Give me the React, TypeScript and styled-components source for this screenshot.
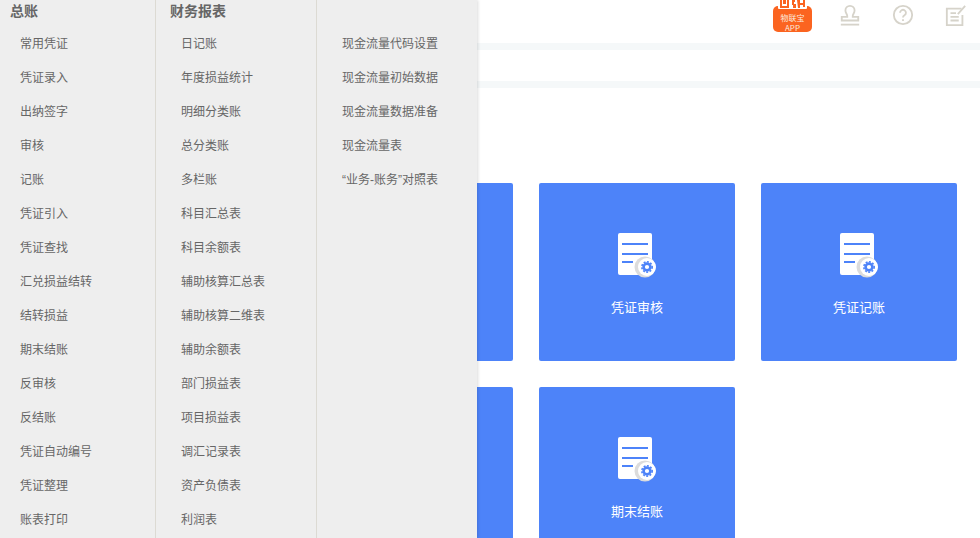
import React from "react";
import styled, { createGlobalStyle } from "styled-components";

const GlobalStyle = createGlobalStyle`
  html, body {
    margin: 0;
    padding: 0;
    background: #fff;
    overflow: hidden;
  }
  body {
    font-family: "Liberation Sans", "Noto Sans CJK SC", sans-serif;
  }
`;

const Page = styled.div`
  position: relative;
  width: 980px;
  height: 538px;
  overflow: hidden;
`;

const Header = styled.header`
  height: 43px;
  display: flex;
  justify-content: flex-end;
  align-items: flex-start;
  gap: 31px;
  padding-right: 13px;
`;

const AppBadge = styled.div`
  position: relative;
  width: 39px;
  height: 26px;
  margin: 6px -4px 0 0;
  background: #fb6420;
  border-radius: 5px;
  color: #fbe9df;
  font-size: 8px;
  line-height: 10px;
  text-align: center;
  padding-top: 7px;
  box-sizing: border-box;
  font-family: "Noto Sans CJK SC", sans-serif;
`;

const Qr = styled.svg`
  position: absolute;
  top: -6px;
  left: 5px;
  width: 29px;
  height: 9px;
`;

const HeaderIcon = styled.svg`
  width: 22px;
  height: 22px;
  margin-top: 4px;
  fill: none;
  stroke: #d6d3ca;
  stroke-width: 2;
`;

const Stripe = styled.div`
  height: 7px;
  background: #f5f8f9;
`;

const Crumb = styled.div`
  height: 31px;
`;

const Grid = styled.main`
  display: grid;
  grid-template-columns: repeat(3, 196px);
  gap: 26px;
  padding-top: 95px;
  margin-left: 317px;
`;

const Card = styled.div`
  height: 178px;
  background: #4d83f9;
  border-radius: 2px;
  display: flex;
  flex-direction: column;
  align-items: center;
  padding-top: 50px;
  box-sizing: border-box;
  color: #fff;
  font-size: 13px;
  font-family: "Noto Sans CJK SC", sans-serif;
`;

const CardIcon = styled.svg`
  width: 40px;
  height: 46px;
  margin-bottom: 18px;
  margin-left: 1px;
`;

const Menu = styled.nav`
  position: absolute;
  top: 0;
  left: 0;
  width: 477px;
  height: 538px;
  display: flex;
  background: #eeeeee;
  box-shadow: 1px 0 3px rgba(0, 0, 0, 0.14);
`;

const Column = styled.div`
  width: 161px;
  box-sizing: border-box;
  border-left: 1px solid #dcdad3;
  padding-left: 14px;

  &:first-child {
    width: 155px;
    border-left: 0;
    padding-left: 10px;
  }
`;

const Title = styled.h3`
  margin: 0;
  height: 27px;
  font-size: 14px;
  line-height: 20px;
  font-weight: 700;
  color: #666;
  font-family: "Noto Sans CJK SC", sans-serif;
`;

const List = styled.ul<{ $indent: number }>`
  list-style: none;
  margin: 0;
  padding: 0 0 0 ${(p) => p.$indent}px;
`;

const Item = styled.li`
  height: 34px;
  line-height: 34px;
  font-size: 12px;
  color: #666;
  white-space: nowrap;
  font-family: "Liberation Sans", "Noto Sans CJK SC", sans-serif;
`;

const DocIcon = () => (
  <CardIcon viewBox="0 0 40 46">
    <rect x="0" y="0" width="34" height="42" rx="2" fill="#fff" />
    <path d="M4 11h26M4 21h26M4 29h11" stroke="#4d83f9" strokeWidth="2" />
    <circle cx="27" cy="34" r="10.5" fill="#dcdcdc" />
    <circle cx="29" cy="34" r="9" fill="#fff" />
    <circle cx="29" cy="34" r="3.4" fill="none" stroke="#4d83f9" strokeWidth="2.6" />
    <circle cx="29" cy="34" r="5.2" fill="none" stroke="#4d83f9" strokeWidth="1.6" strokeDasharray="1.9 1.5" />
  </CardIcon>
);

const columns = [
  {
    title: "总账",
    indent: 10,
    items: ["常用凭证", "凭证录入", "出纳签字", "审核", "记账", "凭证引入", "凭证查找", "汇兑损益结转", "结转损益", "期末结账", "反审核", "反结账", "凭证自动编号", "凭证整理", "账表打印"],
  },
  {
    title: "财务报表",
    indent: 11,
    items: ["日记账", "年度损益统计", "明细分类账", "总分类账", "多栏账", "科目汇总表", "科目余额表", "辅助核算汇总表", "辅助核算二维表", "辅助余额表", "部门损益表", "项目损益表", "调汇记录表", "资产负债表", "利润表"],
  },
  {
    title: "",
    indent: 11,
    items: ["现金流量代码设置", "现金流量初始数据", "现金流量数据准备", "现金流量表", "“业务-账务”对照表"],
  },
];

const cards = ["", "凭证审核", "凭证记账", "", "期末结账"];

export default function App() {
  return (
    <Page>
      <GlobalStyle />
      <Header>
        <AppBadge>
          <Qr viewBox="0 0 29 9">
            <rect width="29" height="9" rx="1" fill="#fff" />
            <path d="M2 0h2v6h5V0h2v8H2zM5 0h3v4H5zM14 0h3v2h-1v2h2v4h-3V5h-1zM19 0h3v3h3V0h2v7h-2V5h-3v3h-2z" fill="#fb6420" />
          </Qr>
          物联宝
          <br />
          APP
        </AppBadge>
        <HeaderIcon viewBox="0 0 24 24">
          <path d="M9 13c0-2-2-3-2-6a5 5 0 0 1 10 0c0 3-2 4-2 6v1h6v4H3v-4h6z" />
          <path d="M2 22.5h20" />
        </HeaderIcon>
        <HeaderIcon viewBox="0 0 24 24">
          <circle cx="12" cy="12" r="10" />
          <path d="M8.8 9.5a3.2 3.2 0 1 1 4.8 2.8c-1 .6-1.6 1.2-1.6 2.4M12 16.5v2" />
        </HeaderIcon>
        <HeaderIcon viewBox="0 0 24 24">
          <path d="M18 5H2v18h17V12" />
          <path d="M6 10h6M6 14h9M6 18h9M14 11l8-9" />
        </HeaderIcon>
      </Header>
      <Stripe />
      <Crumb />
      <Stripe />
      <Grid>
        {cards.map((label, i) => (
          <Card key={i}>
            <DocIcon />
            {label}
          </Card>
        ))}
      </Grid>
      <Menu>
        {columns.map((col, i) => (
          <Column key={i}>
            <Title>{col.title}</Title>
            <List $indent={col.indent}>
              {col.items.map((item) => (
                <Item key={item}>{item}</Item>
              ))}
            </List>
          </Column>
        ))}
      </Menu>
    </Page>
  );
}
